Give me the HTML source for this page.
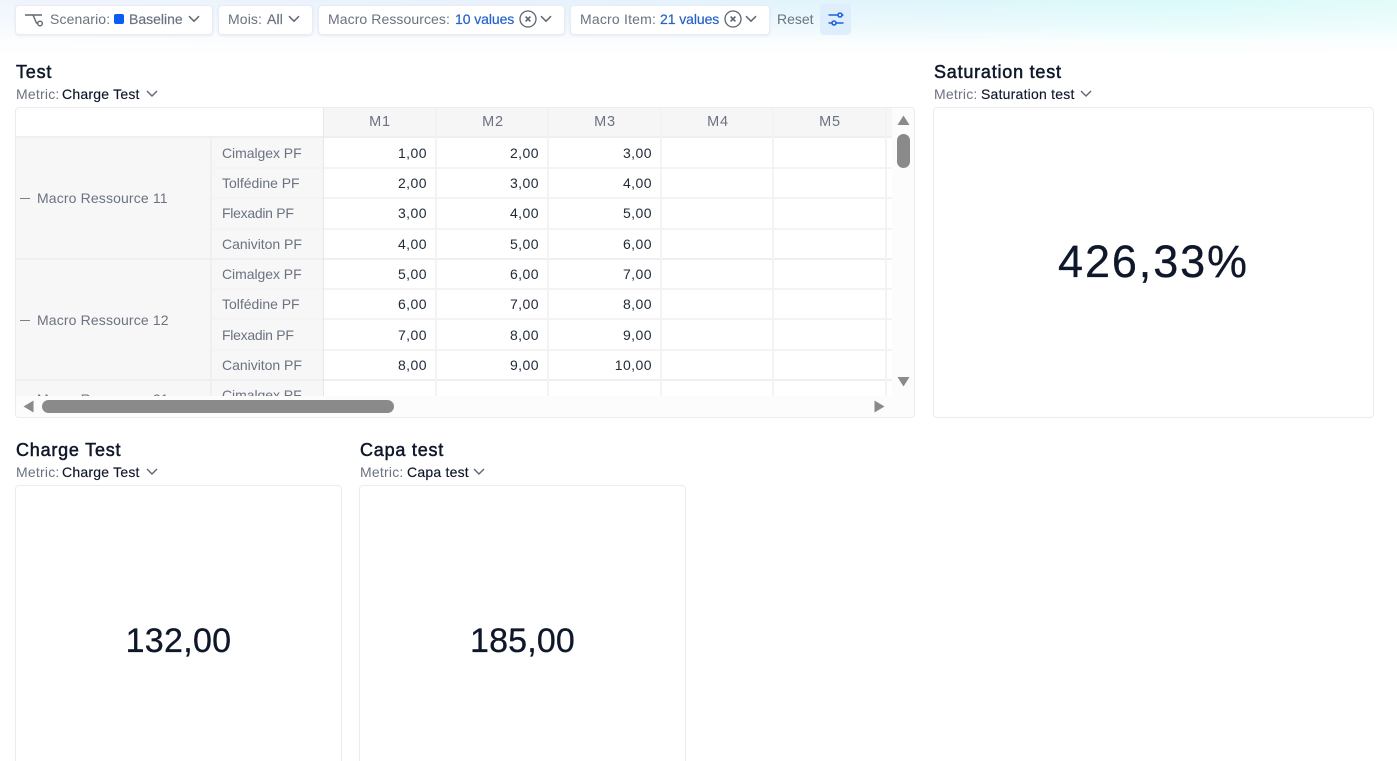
<!DOCTYPE html>
<html lang="en">
<head>
<meta charset="utf-8">
<title>Dashboard</title>
<style>
html{margin:0;padding:0;background:#fff;width:1397px;height:761px;overflow:hidden}
body{margin:0;padding:0;background:#fff;width:1397px;height:761px;position:relative;overflow:hidden;font-family:"Liberation Sans",sans-serif;color:#0f172a}
.a{position:absolute}
.t{position:absolute;white-space:nowrap;line-height:20px;height:20px}
.bg{left:0;top:0;width:1397px;height:62px;background:linear-gradient(to bottom,rgba(255,255,255,0) 0,rgba(255,255,255,.4) 26px,rgba(255,255,255,.85) 42px,#fff 56px),linear-gradient(to right,#f0f5fd 0,#e8f1fc 35%,#dff5fb 65%,#dafafa 85%,#e2fbfa 100%)}
.chip{position:absolute;top:5px;height:28px;background:#fff;border:1px solid #e8ecf3;border-radius:4px;box-shadow:0 1px 2px rgba(30,60,120,.08);box-sizing:content-box}
.g{color:#6b7280;font-size:14px;letter-spacing:.12px}
.sb{-webkit-text-stroke:.2px currentColor}
.b{color:#2563c9;font-size:14px;letter-spacing:-.08px;-webkit-text-stroke:.2px #2563c9}
.h{font-size:18px;font-weight:400;color:#0f172a;letter-spacing:.78px;-webkit-text-stroke:.5px #0f172a}
.ml{color:#6b7280;font-size:14px;letter-spacing:.22px}
.mv{color:#0f172a;font-size:14px;letter-spacing:.22px;-webkit-text-stroke:.15px #0f172a}
.card{position:absolute;background:#fff;border:1px solid #ebecef;border-radius:4px;box-sizing:border-box}
.big{position:absolute;white-space:nowrap;text-align:center;color:#0f172a;-webkit-text-stroke:.3px #0f172a}
.hl{position:absolute;height:2px;background:#f4f4f5}
.vl{position:absolute;width:2px;background:#f3f3f5}
.n{position:absolute;white-space:nowrap;width:60px;text-align:right;font-size:14px;line-height:20px;height:20px;color:#1f2937;letter-spacing:.45px}
.r{color:#6b7280;font-size:14px;letter-spacing:.14px}
.i{color:#6b7280;font-size:14px;letter-spacing:-.02px}
.f{letter-spacing:-.28px}
.m{color:#6b7280;font-size:14.5px;width:42px;text-align:center;letter-spacing:.8px}
svg{position:absolute;overflow:visible}
</style>
</head>
<body>
<div class="a bg"></div>

<!-- Filter bar -->
<div class="chip" style="left:15px;width:196px"></div>
<svg style="left:25px;top:13px" width="20" height="14" viewBox="0 0 20 14" fill="none" stroke="#5f6773" stroke-width="1.4"><path d="M0 2H17M8 2L11.5 10H12.8"/><circle cx="15" cy="10.5" r="2.3"/></svg>
<div class="t g" style="left:50px;top:9px">Scenario:</div>
<div class="a" style="left:114px;top:14px;width:10px;height:10px;background:#0b5cf0;border-radius:2px"></div>
<div class="t g sb" style="left:129px;top:9px;letter-spacing:0">Baseline</div>
<svg style="left:188px;top:15px" width="12" height="8" viewBox="0 0 12 8" fill="none" stroke="#5f6773" stroke-width="1.5"><path d="M1 1.2L6 6.2L11 1.2"/></svg>

<div class="chip" style="left:218px;width:93px"></div>
<div class="t g" style="left:228px;top:9px">Mois:</div>
<div class="t g sb" style="left:267px;top:9px">All</div>
<svg style="left:288px;top:15px" width="12" height="8" viewBox="0 0 12 8" fill="none" stroke="#5f6773" stroke-width="1.5"><path d="M1 1.2L6 6.2L11 1.2"/></svg>

<div class="chip" style="left:318px;width:245px"></div>
<div class="t g" style="left:328px;top:9px;letter-spacing:.08px">Macro Ressources:</div>
<div class="t b" style="left:455px;top:9px">10 values</div>
<svg style="left:519px;top:10px" width="18" height="18" viewBox="0 0 18 18" fill="none" stroke="#5b6470" stroke-width="1.3"><circle cx="9" cy="9" r="8"/><path d="M6.6 6.6L11.4 11.4M11.4 6.6L6.6 11.4" stroke-width="1.6"/></svg>
<svg style="left:540px;top:15px" width="12" height="8" viewBox="0 0 12 8" fill="none" stroke="#5f6773" stroke-width="1.5"><path d="M1 1.2L6 6.2L11 1.2"/></svg>

<div class="chip" style="left:570px;width:198px"></div>
<div class="t g" style="left:580px;top:9px;letter-spacing:.2px">Macro Item:</div>
<div class="t b" style="left:660px;top:9px">21 values</div>
<svg style="left:724px;top:10px" width="18" height="18" viewBox="0 0 18 18" fill="none" stroke="#5b6470" stroke-width="1.3"><circle cx="9" cy="9" r="8"/><path d="M6.6 6.6L11.4 11.4M11.4 6.6L6.6 11.4" stroke-width="1.6"/></svg>
<svg style="left:745px;top:15px" width="12" height="8" viewBox="0 0 12 8" fill="none" stroke="#5f6773" stroke-width="1.5"><path d="M1 1.2L6 6.2L11 1.2"/></svg>

<div class="t g" style="left:777px;top:9px;letter-spacing:0">Reset</div>
<div class="a" style="left:820px;top:4px;width:31px;height:31px;background:#dfeefc;border-radius:4px"></div>
<svg style="left:828px;top:11px" width="16" height="16" viewBox="0 0 16 16" fill="none" stroke="#1d63d8" stroke-width="1.6"><path d="M0.5 4H10M14 4H15.5M0.5 12H4M8 12H15.5"/><circle cx="12" cy="4" r="2"/><circle cx="6" cy="12" r="2"/></svg>

<!-- Headings -->
<div class="t h" style="left:16px;top:62px">Test</div>
<div class="t ml" style="left:16px;top:84px">Metric:</div>
<div class="t mv" style="left:62px;top:84px">Charge Test</div>
<svg style="left:146px;top:90px" width="12" height="8" viewBox="0 0 12 8" fill="none" stroke="#5f6773" stroke-width="1.4"><path d="M1 1L6 6L11 1"/></svg>

<div class="t h" style="left:934px;top:62px">Saturation test</div>
<div class="t ml" style="left:934px;top:84px">Metric:</div>
<div class="t mv" style="left:981px;top:84px">Saturation test</div>
<svg style="left:1080px;top:90px" width="12" height="8" viewBox="0 0 12 8" fill="none" stroke="#5f6773" stroke-width="1.4"><path d="M1 1L6 6L11 1"/></svg>

<div class="t h" style="left:16px;top:440px">Charge Test</div>
<div class="t ml" style="left:16px;top:462px">Metric:</div>
<div class="t mv" style="left:62px;top:462px">Charge Test</div>
<svg style="left:146px;top:468px" width="12" height="8" viewBox="0 0 12 8" fill="none" stroke="#5f6773" stroke-width="1.4"><path d="M1 1L6 6L11 1"/></svg>

<div class="t h" style="left:360px;top:440px">Capa test</div>
<div class="t ml" style="left:360px;top:462px">Metric:</div>
<div class="t mv" style="left:407px;top:462px">Capa test</div>
<svg style="left:473px;top:468px" width="12" height="8" viewBox="0 0 12 8" fill="none" stroke="#5f6773" stroke-width="1.4"><path d="M1 1L6 6L11 1"/></svg>

<!-- KPI cards -->
<div class="card" style="left:933px;top:107px;width:441px;height:311px"></div>
<div class="big" style="left:933px;top:235px;width:441px;line-height:54px;font-size:45px;letter-spacing:1.9px">426,33%</div>
<div class="card" style="left:15px;top:485px;width:327px;height:290px"></div>
<div class="big" style="left:15px;top:620px;width:327px;line-height:42px;font-size:34px;letter-spacing:.3px">132,00</div>
<div class="card" style="left:359px;top:485px;width:327px;height:290px"></div>
<div class="big" style="left:359px;top:620px;width:327px;line-height:42px;font-size:34px;letter-spacing:.15px">185,00</div>

<!-- Table -->
<div class="card" style="left:15px;top:107px;width:900px;height:311px"></div>
<div class="a" style="left:16px;top:108px;width:898px;height:309px;overflow:hidden;border-radius:4px">
  <div style="position:absolute;left:0;top:0;width:898px;height:309px;transform:translate(-16px,-108px)">
    <div class="a" style="left:16px;top:138px;width:307px;height:258px;background:#f7f7f8"></div>
    <div class="a" style="left:324px;top:108px;width:568px;height:29px;background:#f6f6f7"></div>
    <div class="a" style="left:892px;top:108px;width:22px;height:309px;background:#fcfcfc"></div>
    <div class="a" style="left:16px;top:396px;width:898px;height:21px;background:#fcfcfc;z-index:3"></div>

    <div class="hl" style="left:16px;top:136px;width:876px;background:#eeeff0"></div>
    <div class="hl" style="left:211px;top:167px;width:681px"></div>
    <div class="hl" style="left:211px;top:197px;width:681px"></div>
    <div class="hl" style="left:211px;top:228px;width:681px"></div>
    <div class="hl" style="left:16px;top:258px;width:876px;background:#eeeff0"></div>
    <div class="hl" style="left:211px;top:288px;width:681px"></div>
    <div class="hl" style="left:211px;top:318px;width:681px"></div>
    <div class="hl" style="left:211px;top:349px;width:681px"></div>
    <div class="hl" style="left:16px;top:379px;width:876px;background:#eeeff0"></div>

    <div class="vl" style="left:210px;top:138px;height:258px;background:#eeeff0"></div>
    <div class="vl" style="left:323px;top:108px;height:288px;width:1px;background:#e6e7e9"></div>
    <div class="vl" style="left:435px;top:108px;height:288px"></div>
    <div class="vl" style="left:547px;top:108px;height:288px"></div>
    <div class="vl" style="left:660px;top:108px;height:288px"></div>
    <div class="vl" style="left:772px;top:108px;height:288px"></div>
    <div class="vl" style="left:885px;top:108px;height:288px"></div>

    <div class="t m" style="left:359px;top:112px">M1</div>
    <div class="t m" style="left:472px;top:112px">M2</div>
    <div class="t m" style="left:584px;top:112px">M3</div>
    <div class="t m" style="left:697px;top:112px">M4</div>
    <div class="t m" style="left:809px;top:112px">M5</div>

    <div class="a" style="left:20px;top:198px;width:10px;height:1px;background:#7b818b"></div>
    <div class="t r" style="left:37px;top:188px">Macro Ressource 11</div>
    <div class="a" style="left:20px;top:320px;width:10px;height:1px;background:#7b818b"></div>
    <div class="t r" style="left:37px;top:310px">Macro Ressource 12</div>
    <div class="t r" style="left:37px;top:389px">Macro Ressource 21</div>

    <div class="t i" style="left:222px;top:143px;letter-spacing:-.05px">Cimalgex PF</div>
    <div class="t i" style="left:222px;top:173px">Tolfédine PF</div>
    <div class="t i f" style="left:222px;top:203px">Flexadin PF</div>
    <div class="t i" style="left:222px;top:234px">Caniviton PF</div>
    <div class="t i" style="left:222px;top:264px;letter-spacing:-.05px">Cimalgex PF</div>
    <div class="t i" style="left:222px;top:294px">Tolfédine PF</div>
    <div class="t i f" style="left:222px;top:325px">Flexadin PF</div>
    <div class="t i" style="left:222px;top:355px">Caniviton PF</div>
    <div class="t i" style="left:222px;top:385px;letter-spacing:-.05px">Cimalgex PF</div>

    <div class="n" style="left:367px;top:143px">1,00</div><div class="n" style="left:479px;top:143px">2,00</div><div class="n" style="left:592px;top:143px">3,00</div>
    <div class="n" style="left:367px;top:173px">2,00</div><div class="n" style="left:479px;top:173px">3,00</div><div class="n" style="left:592px;top:173px">4,00</div>
    <div class="n" style="left:367px;top:203px">3,00</div><div class="n" style="left:479px;top:203px">4,00</div><div class="n" style="left:592px;top:203px">5,00</div>
    <div class="n" style="left:367px;top:234px">4,00</div><div class="n" style="left:479px;top:234px">5,00</div><div class="n" style="left:592px;top:234px">6,00</div>
    <div class="n" style="left:367px;top:264px">5,00</div><div class="n" style="left:479px;top:264px">6,00</div><div class="n" style="left:592px;top:264px">7,00</div>
    <div class="n" style="left:367px;top:294px">6,00</div><div class="n" style="left:479px;top:294px">7,00</div><div class="n" style="left:592px;top:294px">8,00</div>
    <div class="n" style="left:367px;top:325px">7,00</div><div class="n" style="left:479px;top:325px">8,00</div><div class="n" style="left:592px;top:325px">9,00</div>
    <div class="n" style="left:367px;top:355px">8,00</div><div class="n" style="left:479px;top:355px">9,00</div><div class="n" style="left:592px;top:355px">10,00</div>
  </div>
</div>

<!-- Scrollbars -->
<svg style="left:0;top:0;z-index:5" width="1397" height="761" viewBox="0 0 1397 761" fill="#8a8a8a">
  <path d="M903.5 115.5L909.5 125H897.5Z"/>
  <path d="M903.5 386.5L897.5 377H909.5Z"/>
  <path d="M23.5 406.5L33.5 400.5V412.5Z"/>
  <path d="M884.5 406.5L874.5 400.5V412.5Z"/>
  <rect x="897" y="134" width="13" height="34" rx="6.5"/>
  <rect x="42" y="400" width="352" height="13" rx="6.5"/>
</svg>
</body>
</html>
